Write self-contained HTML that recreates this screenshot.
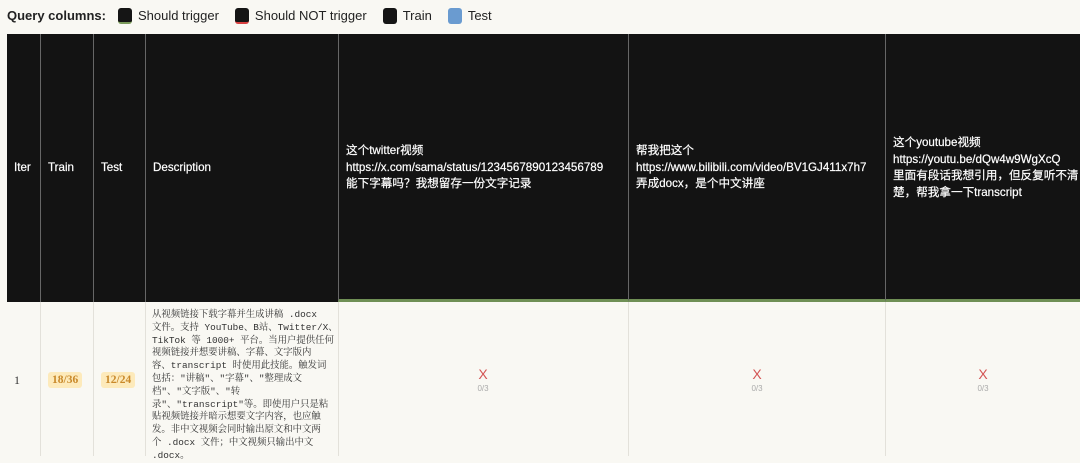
<!DOCTYPE html>
<html><head><meta charset="utf-8"><style>
*{margin:0;padding:0;box-sizing:border-box}
body{width:1080px;height:456px;overflow:hidden;background:#f9f8f3;font-family:"Liberation Sans","Noto Sans CJK SC",sans-serif;position:relative}
.leg{position:absolute;top:7px;left:7px;font-size:13px;color:#222;display:flex;align-items:center;height:17px}
.leg b{font-weight:bold;margin-right:12px}
.sw{display:inline-block;width:14px;height:16px;border-radius:3px;background:#151515;margin-right:6px;vertical-align:middle}
.it{margin-right:16px;display:flex;align-items:center}
.hd{position:absolute;top:34px;height:268px;background:#131313;border-left:1px solid #666}
.hd span{position:absolute;color:#fff;font-size:11.6px;font-weight:normal;line-height:16.5px;left:7px;white-space:nowrap;-webkit-text-stroke:0.2px #fff}
.bd{position:absolute;top:302px;height:154px;border-left:1px solid #e3e1da}
.badge{position:absolute;top:372px;background:#fdeabb;color:#c9892a;font-family:"Liberation Serif",serif;font-weight:bold;font-size:11.5px;padding:2px 4px;border-radius:3px}
.desc{position:absolute;left:152px;top:309px;white-space:nowrap;font-family:"Liberation Mono","Noto Serif CJK SC",monospace;font-size:9.4px;line-height:12.8px;color:#333}
.x{position:absolute;top:366px;color:#d45555;font-size:14px;text-align:center;width:40px;font-family:"Liberation Sans",sans-serif}
.fr{position:absolute;top:384px;color:#aaa;font-size:8px;text-align:center;width:40px}
</style></head><body>
<div class="leg"><b>Query columns:</b>
<span class="it"><span class="sw" style="border-bottom:2px solid #7a9a5a"></span>Should trigger</span>
<span class="it"><span class="sw" style="border-bottom:2px solid #d84040"></span>Should NOT trigger</span>
<span class="it"><span class="sw"></span>Train</span>
<span class="it"><span class="sw" style="background:#6a9bd0"></span>Test</span></div>

<div class="hd" style="left:7px;width:34px;border-left:none"><span style="top:126px">Iter</span></div>
<div class="hd" style="left:40px;width:53px"><span style="top:126px">Train</span></div>
<div class="hd" style="left:93px;width:52px"><span style="top:126px">Test</span></div>
<div class="hd" style="left:145px;width:193px"><span style="top:126px">Description</span></div>
<div class="hd" style="left:338px;width:290px;border-bottom:3px solid #6f8f55"><span style="top:109px">这个twitter视频<br>https://x.com/sama/status/1234567890123456789<br>能下字幕吗？我想留存一份文字记录</span></div>
<div class="hd" style="left:628px;width:257px;border-bottom:3px solid #6f8f55"><span style="top:109px">帮我把这个<br>https://www.bilibili.com/video/BV1GJ411x7h7<br>弄成docx，是个中文讲座</span></div>
<div class="hd" style="left:885px;width:195px;border-bottom:3px solid #6f8f55"><span style="top:101px">这个youtube视频<br>https://youtu.be/dQw4w9WgXcQ<br>里面有段话我想引用，但反复听不清<br>楚，帮我拿一下transcript</span></div>

<div class="bd" style="left:40px"></div><div class="bd" style="left:93px"></div><div class="bd" style="left:145px"></div><div class="bd" style="left:338px"></div><div class="bd" style="left:628px"></div><div class="bd" style="left:885px"></div>
<div style="position:absolute;left:14px;top:373px;font-family:'Liberation Serif',serif;font-size:12px;color:#333">1</div>
<div class="badge" style="left:48px">18/36</div>
<div class="badge" style="left:101px">12/24</div>
<div class="desc">从视频链接下载字幕并生成讲稿 .docx<br>文件。支持 YouTube、B站、Twitter/X、<br>TikTok 等 1000+ 平台。当用户提供任何<br>视频链接并想要讲稿、字幕、文字版内<br>容、transcript 时使用此技能。触发词<br>包括："讲稿"、"字幕"、"整理成文<br>档"、"文字版"、"转<br>录"、"transcript"等。即使用户只是粘<br>贴视频链接并暗示想要文字内容，也应触<br>发。非中文视频会同时输出原文和中文两<br>个 .docx 文件；中文视频只输出中文<br>.docx。</div>
<div class="x" style="left:463px">X</div><div class="fr" style="left:463px">0/3</div>
<div class="x" style="left:737px">X</div><div class="fr" style="left:737px">0/3</div>
<div class="x" style="left:963px">X</div><div class="fr" style="left:963px">0/3</div>
</body></html>
